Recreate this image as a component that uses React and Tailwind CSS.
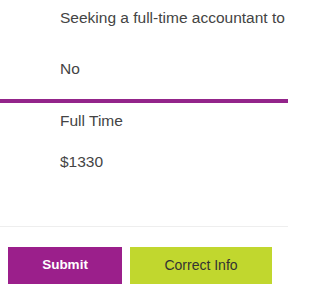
export default function App() {
  return (
    <div className="w-[288px] h-[288px] overflow-hidden bg-white text-[#444] font-['Liberation_Sans',Arial,sans-serif]">
      <div className="pt-[6px] pl-[60px] text-[15.5px] leading-[24px] whitespace-nowrap">
        Seeking a full-time accountant to
      </div>
      <div className="mt-[27px] pl-[60px] text-[15.5px] leading-[24px]">No</div>
      <div className="mt-[18px] h-[4px] bg-[#93248a]"></div>
      <div className="mt-[6px] pl-[60px] text-[15.5px] leading-[24px]">Full Time</div>
      <div className="mt-[17px] pl-[60px] text-[15.5px] leading-[24px]">$1330</div>
      <div className="mt-[52px] h-px bg-[#eeeeee]"></div>
      <div className="mt-[20px] flex gap-[8px] pl-[8px]">
        <button className="w-[114px] h-[37px] bg-[#9b1f8b] text-white text-[13.5px] font-bold flex items-center justify-center">
          Submit
        </button>
        <button className="w-[142px] h-[37px] bg-[#c1d72e] text-[#333] text-[14px] flex items-center justify-center">
          Correct Info
        </button>
      </div>
    </div>
  );
}
